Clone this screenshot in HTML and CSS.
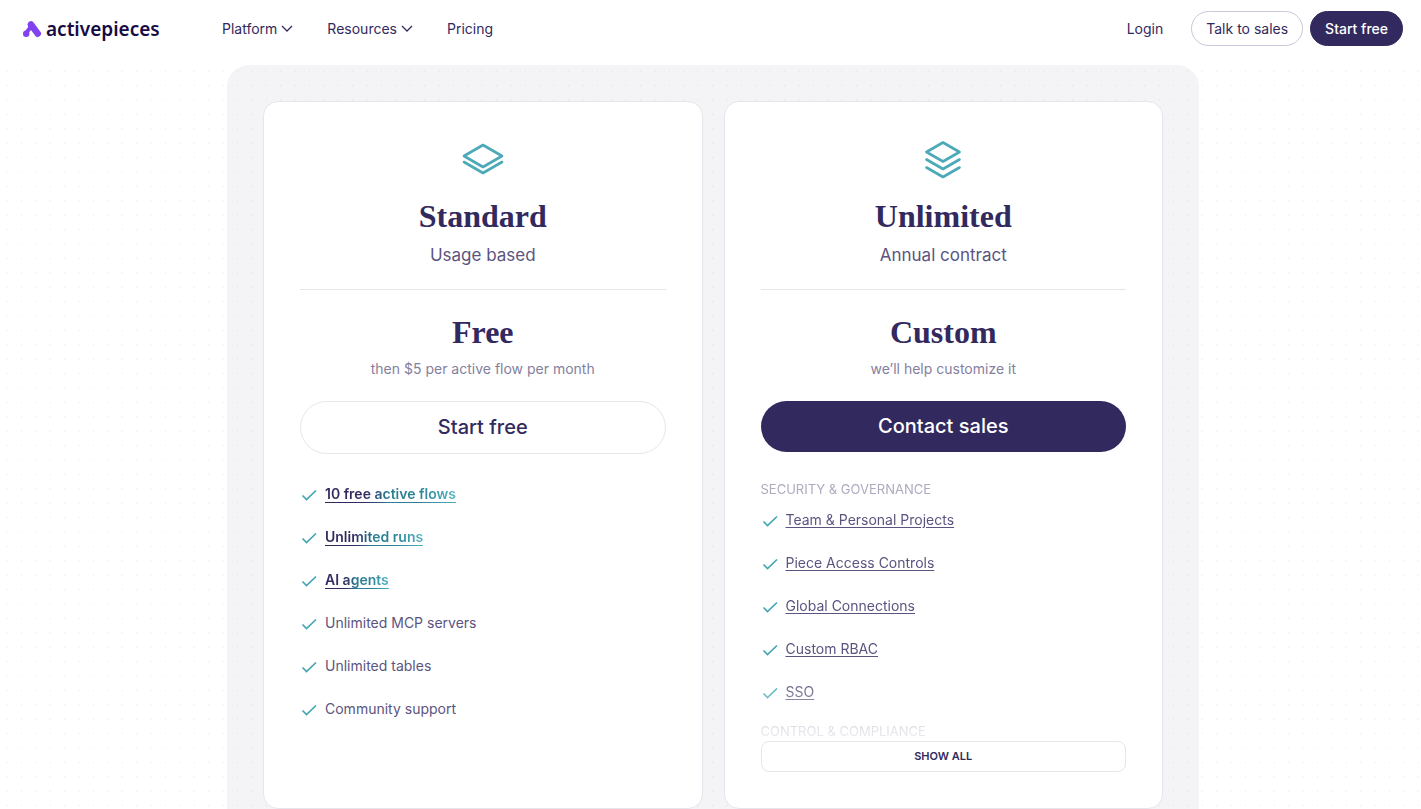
FILE: index.html
```html
<!DOCTYPE html>
<html lang="en">

<head>
    <meta charset="UTF-8">
    <meta name="viewport" content="width=device-width, initial-scale=1.0">
    <title>Pricing - Activepieces</title>
    <link rel="stylesheet" href="styles.css">
</head>

<body>
    <svg class="sprite" aria-hidden="true">
        <symbol id="check" viewBox="0 0 16 16">
            <path d="M1.500 8.500l4 4L15 3.500" />
        </symbol>
        <symbol id="chevron" viewBox="0 0 12 12">
            <path d="M1 3l5 5 5-5" />
        </symbol>
    </svg>

    <header class="header">
        <a class="logo" href="#">
            <svg class="logo-icon" viewBox="0 0 20 18" aria-hidden="true">
                <path class="leg" d="M9 4.500L15.700 13.700" />
                <path class="link" d="M8 5.500L8 8L4.500 12.500" />
                <circle cx="4.200" cy="13.800" r="3.200" />
            </svg>
            <span>activepieces</span>
        </a>
        <nav class="nav">
            <button class="nav-item" type="button">Platform <svg class="chevron"><use href="#chevron" /></svg></button>
            <button class="nav-item" type="button">Resources <svg class="chevron"><use href="#chevron" /></svg></button>
            <a class="nav-item" href="#">Pricing</a>
        </nav>
        <div class="actions">
            <a class="nav-item login" href="#">Login</a>
            <a class="pill" href="#">Talk to sales</a>
            <a class="pill pill-dark" href="#">Start free</a>
        </div>
    </header>

    <main class="page">
        <section class="panel">
            <article class="card">
                <svg class="card-icon" viewBox="0 0 44 44" aria-hidden="true">
                    <path d="M22 7L41 18L22 29L3 18ZM3 24L22 35L41 24" />
                </svg>
                <h2 class="title">Standard</h2>
                <p class="subtitle">Usage based</p>
                <hr class="line">
                <h3 class="title">Free</h3>
                <p class="note">then $5 per active flow per month</p>
                <a class="cta" href="#">Start free</a>
                <ul class="list">
                    <li><svg class="check"><use href="#check" /></svg><a class="strong" href="#"><span>10 free active flows</span></a></li>
                    <li><svg class="check"><use href="#check" /></svg><a class="strong" href="#"><span>Unlimited runs</span></a></li>
                    <li><svg class="check"><use href="#check" /></svg><a class="strong" href="#"><span>AI agents</span></a></li>
                    <li><svg class="check"><use href="#check" /></svg>Unlimited MCP servers</li>
                    <li><svg class="check"><use href="#check" /></svg>Unlimited tables</li>
                    <li><svg class="check"><use href="#check" /></svg>Community support</li>
                </ul>
            </article>

            <article class="card">
                <svg class="card-icon" viewBox="0 0 44 44" aria-hidden="true">
                    <path d="M22 4.500L38.500 14L22 23.500L5.500 14ZM5.500 21.500L22 31L38.500 21.500M5.500 29.500L22 39L38.500 29.500" />
                </svg>
                <h2 class="title">Unlimited</h2>
                <p class="subtitle">Annual contract</p>
                <hr class="line">
                <h3 class="title">Custom</h3>
                <p class="note">we’ll help customize it</p>
                <a class="cta cta-dark" href="#">Contact sales</a>
                <div class="groups">
                    <h4 class="group-title">Security &amp; Governance</h4>
                    <ul class="list">
                        <li><svg class="check"><use href="#check" /></svg><a href="#">Team &amp; Personal Projects</a></li>
                        <li><svg class="check"><use href="#check" /></svg><a href="#">Piece Access Controls</a></li>
                        <li><svg class="check"><use href="#check" /></svg><a href="#">Global Connections</a></li>
                        <li><svg class="check"><use href="#check" /></svg><a href="#">Custom RBAC</a></li>
                        <li><svg class="check"><use href="#check" /></svg><a href="#">SSO</a></li>
                    </ul>
                    <h4 class="group-title">Control &amp; Compliance</h4>
                </div>
                <button class="show-all" type="button">Show all</button>
            </article>
        </section>
    </main>
</body>

</html>
```

FILE: styles.css
```css
* {
    padding: 0;
    margin: 0;
    box-sizing: border-box;
}

html {
    scrollbar-width: none;
}

body {
    font-family: Inter, "Liberation Sans", sans-serif;
    font-size: 14px;
    line-height: 20px;
    color: #32295e;
    background: #fff;
}

a {
    color: inherit;
    text-decoration: none;
}

button {
    font: inherit;
    color: inherit;
    border: none;
    background: none;
    cursor: pointer;
}

.sprite {
    display: none;
}

.header {
    display: flex;
    align-items: center;
    height: 64px;
    padding: 0 18px 7px 22px;
    background: #fff;
}

.logo {
    display: flex;
    align-items: center;
    gap: 4px;
    width: 200px;
    font-family: "Noto Sans", sans-serif;
    font-size: 19px;
    font-weight: 600;
    line-height: 24px;
    color: #170b45;
}

.logo-icon {
    width: 20px;
    height: 18px;
    fill: #8142f0;
}

.logo-icon path {
    fill: none;
    stroke: #8142f0;
    stroke-linecap: round;
}

.logo-icon .leg {
    stroke-width: 6.5;
}

.logo-icon .link {
    stroke-width: 4;
}

.nav {
    display: flex;
    gap: 34px;
}

.nav-item {
    display: flex;
    align-items: center;
    gap: 4px;
    line-height: 21px;
}

.chevron {
    width: 12px;
    height: 12px;
    fill: none;
    stroke: #32295e;
    stroke-width: 1.3;
}

.actions {
    display: flex;
    align-items: center;
    gap: 7px;
    margin-left: auto;
}

.login {
    margin-right: 21px;
}

.pill {
    padding: 7px 14px;
    border: 1px solid #cac7d9;
    border-radius: 18px;
    line-height: 19px;
}

.pill-dark {
    color: #fff;
    font-weight: 500;
    border-color: #32295e;
    background: #32295e;
}

/* dotted paper behind the plans */
.page {
    position: relative;
    padding: 1px 0 0 5px;
}

.page::before {
    content: "";
    position: absolute;
    inset: 0;
    pointer-events: none;
    background: url("data:image/svg+xml,%3Csvg xmlns='http://www.w3.org/2000/svg' width='72' height='72' viewBox='0 0 50 50'%3E%3Cpath d='M4.500 5h50M4.500 15h50M4.500 25h50M4.500 35h50M4.500 45h50' stroke='%2332295e' stroke-opacity='.09' stroke-width='.8' stroke-dasharray='.8 9.200'/%3E%3C/svg%3E");
}

.panel {
    display: grid;
    grid-template-columns: 1fr 1fr;
    gap: 21px;
    max-width: 972px;
    margin: 0 auto;
    padding: 36px;
    border-radius: 22px;
    background: #f4f4f7;
}

.card {
    position: relative;
    display: flex;
    flex-direction: column;
    padding: 36px;
    border: 1px solid #e6e5ec;
    border-radius: 15px;
    background: #fff;
    text-align: center;
}

.card-icon {
    width: 44px;
    height: 44px;
    margin: 0 auto 16px;
    fill: none;
    stroke: #4ba9b8;
    stroke-width: 2.6;
    stroke-linecap: round;
    stroke-linejoin: round;
}

.title {
    font-family: "Liberation Serif", serif;
    font-size: 32px;
    font-weight: 700;
    line-height: 36px;
}

.subtitle {
    margin-top: 9px;
    font-size: 17px;
    line-height: 24px;
    color: #5b5480;
}

.line {
    margin: 22px 0 24px;
    border: none;
    border-top: 1px solid #e6e5ea;
}

.note {
    margin-top: 9px;
    color: #847fa0;
}

.cta {
    margin-top: 22px;
    padding: 12px;
    border: 1px solid #e6e5ea;
    border-radius: 27px;
    font-size: 20px;
    font-weight: 500;
    line-height: 27px;
}

.cta-dark {
    border: none;
    color: #fff;
    background: #32295e;
}

.list {
    display: flex;
    flex-direction: column;
    gap: 23px;
    margin-top: 30px;
    list-style: none;
    text-align: left;
    color: #5b5480;
}

.list li {
    display: flex;
    align-items: center;
    gap: 8px;
    height: 20px;
    padding-left: 1px;
}

.list a {
    text-decoration: underline;
    text-underline-offset: 2px;
}

/* clipping hides a text underline, so the border carries the gradient */
.list .strong {
    border-bottom: 1px solid;
    border-image: linear-gradient(90deg, #32295e 30%, #2a7f94 50%, #2a7f94 70%, #4fb3c0) 1;
    font-weight: 600;
    line-height: 16px;
    text-decoration: none;
}

.strong span {
    display: block;
    color: transparent;
    background: linear-gradient(90deg, #32295e 30%, #2a7f94 50%, #2a7f94 70%, #4fb3c0);
    -webkit-background-clip: text;
    background-clip: text;
}

.check {
    width: 16px;
    height: 16px;
    margin-top: 2px;
    fill: none;
    stroke: #43a6b5;
    stroke-width: 1.7;
}

.groups {
    margin-top: 29px;
    text-align: left;
    -webkit-mask-image: linear-gradient(#000 75%, transparent 108%);
    mask-image: linear-gradient(#000 75%, transparent 108%);
}

.groups .list {
    margin: 13px 0 21px;
}

.group-title {
    font-size: 13px;
    font-weight: 400;
    line-height: 16px;
    text-transform: uppercase;
    color: #aeabc0;
}

.show-all {
    margin-top: 2px;
    padding: 6px;
    border: 1px solid #e6e5ea;
    border-radius: 8px;
    font-size: 11px;
    font-weight: 600;
    line-height: 17px;
    text-transform: uppercase;
}
```
